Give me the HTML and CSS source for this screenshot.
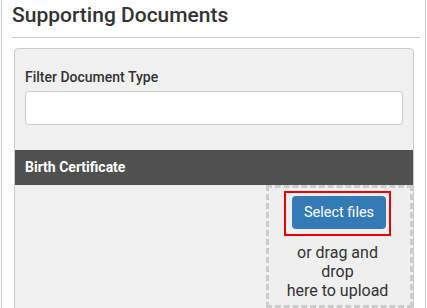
FILE: index.html
```html
<!DOCTYPE html>
<html>
<head>
<meta charset="utf-8">
<link rel="stylesheet" href="styles.css">
</head>
<body>
<div class="page">
  <h2 class="title">Supporting Documents</h2>
  <hr class="rule">
  <div class="panel">
    <div class="filter">
      <label class="filter-label" for="doctype">Filter Document Type</label>
      <input class="filter-input" id="doctype" type="text">
    </div>
    <div class="doc-head">Birth Certificate</div>
    <div class="doc-body">
      <div class="dropzone">
        <div class="highlight"><button class="select-btn" type="button">Select files</button></div>
        <div class="hint">or drag and drop<br>here to upload</div>
      </div>
    </div>
  </div>
</div>
</body>
</html>
```
FILE: styles.css
```css
* { box-sizing: border-box; }
html, body { margin: 0; padding: 0; background: #fff; }
body { font-family: Roboto, "Liberation Sans", Arial, sans-serif; color: #333; }

.page {
  margin-left: 1px;
  width: 425px;
  height: 308px;
  border-left: 1px solid #ccc;
  border-right: 1px solid #ccc;
  padding: 3px 0 0 10px;
  overflow: hidden;
}

.title {
  margin: 0;
  font-size: 21px;
  line-height: 25px;
  font-weight: 500;
  color: #333;
}

.rule {
  margin: 9px 0 0 0;
  width: 408px;
  height: 1px;
  border: 0;
  background: #ccc;
}

.panel {
  margin: 10px 0 0 2px;
  width: 400px;
  height: 400px;
  border: 1px solid #ccc;
  border-radius: 4px;
  background: #f0f0f0;
}

.filter {
  padding: 18px 10px 25px 10px;
  display: flex;
  flex-direction: column;
}

.filter-label {
  font-size: 14px;
  line-height: 20px;
  font-weight: 500;
  color: #333;
}

.filter-input {
  margin-top: 4px;
  height: 34px;
  width: 100%;
  border: 1px solid #ccc;
  border-radius: 4px;
  background: #fff;
}

.doc-head {
  height: 35px;
  line-height: 35px;
  padding-left: 10px;
  background: #505050;
  color: #fff;
  font-size: 14px;
  font-weight: 700;
}

.doc-body {
  display: flex;
  justify-content: flex-end;
}

.dropzone {
  width: 147px;
  height: 123px;
  border: 3px dashed #ccc;
  background: #efefef;
  padding: 3px 19px 0 15px;
  text-align: center;
}

.highlight {
  display: inline-block;
  border: 2px solid #e00;
  padding: 3px 3px 5px 6px;
}

.select-btn {
  display: block;
  width: 94px;
  height: 33px;
  border: 0;
  border-radius: 4px;
  background: #337ab7;
  color: #fff;
  font-family: Roboto, "Liberation Sans", Arial, sans-serif;
  font-size: 14.5px;
  font-weight: 400;
  padding: 0;
}

.hint {
  margin-top: 7px;
  font-size: 16px;
  line-height: 19px;
  color: #333;
}
```
